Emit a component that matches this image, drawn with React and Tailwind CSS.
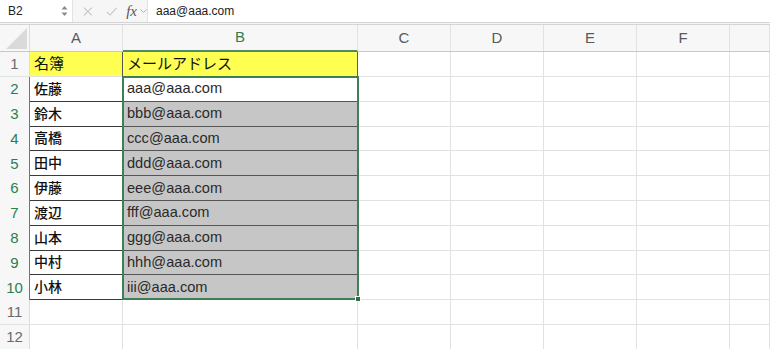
import React from "react";

const cols = [
  { key: "A", w: "w-[93px]" },
  { key: "B", w: "w-[235px]" },
  { key: "C", w: "w-[93px]" },
  { key: "D", w: "w-[93px]" },
  { key: "E", w: "w-[93px]" },
  { key: "F", w: "w-[93px]" },
  { key: "G", w: "flex-1" },
];

const rows = [
  ["佐藤", "aaa@aaa.com"],
  ["鈴木", "bbb@aaa.com"],
  ["高橋", "ccc@aaa.com"],
  ["田中", "ddd@aaa.com"],
  ["伊藤", "eee@aaa.com"],
  ["渡辺", "fff@aaa.com"],
  ["山本", "ggg@aaa.com"],
  ["中村", "hhh@aaa.com"],
  ["小林", "iii@aaa.com"],
];

const jp = "font-['Liberation_Sans','Noto_Sans_CJK_JP',sans-serif]";

const FormulaBar = () => (
  <div className="h-[25px] flex items-stretch bg-[#f6f6f6] border-b-[3px] border-double border-[#d4d4d4]">
    <div className="w-[73px] flex items-center bg-white pl-[8px] pr-[4px] border-r border-[#e2e2e2]">
      <span className="flex-1 text-[12px] text-[#222]">B2</span>
      <svg width="7" height="12" viewBox="0 0 7 12">
        <path d="M3.5 1 L6.5 4.5 L0.5 4.5 Z" fill="#8a8a8a" />
        <path d="M3.5 11 L6.5 7.5 L0.5 7.5 Z" fill="#8a8a8a" />
      </svg>
    </div>
    <div className="w-[74px] flex items-center gap-[13px] pl-[10px]">
      <svg width="11" height="11" viewBox="0 0 11 11">
        <path d="M1 1 L10 10 M10 1 L1 10" stroke="#c4c4c4" strokeWidth="1.2" />
      </svg>
      <svg width="13" height="11" viewBox="0 0 13 11">
        <path d="M1 6 L4.5 9.5 L12 1.5" stroke="#c4c4c4" strokeWidth="1.2" fill="none" />
      </svg>
      <div className="flex items-center gap-[3px] -ml-[4px]">
        <span className="font-['Liberation_Serif',serif] italic text-[15px] text-[#555] leading-none">fx</span>
        <svg width="7" height="5" viewBox="0 0 7 5">
          <path d="M0.5 0.5 L3.5 3.5 L6.5 0.5" stroke="#b0b0b0" strokeWidth="1" fill="none" />
        </svg>
      </div>
    </div>
    <div className="flex-1 flex items-center bg-white border-l border-[#e2e2e2] pl-[8px] text-[12px] text-[#222]">
      aaa@aaa.com
    </div>
  </div>
);

const HeaderRow = () => (
  <div className="h-[27px] flex bg-[#f7f7f7] border-b border-[#c8c8c8]">
    <div className="w-[30px] relative border-r border-[#dcdcdc]">
      <svg className="absolute right-[2px] bottom-[2px]" width="21" height="21" viewBox="0 0 21 21">
        <path d="M21 0 L21 21 L0 21 Z" fill="#dadada" />
      </svg>
    </div>
    {cols.map((c) => (
      <div
        key={c.key}
        className={`${c.w} flex items-center justify-center text-[15px] border-r border-[#e2e2e2] ${
          c.key === "B" ? "text-[#2e7d4f] border-b-2 border-b-[#4e8a62] -mb-px" : "text-[#5a5a5a]"
        }`}
      >
        {c.key === "G" ? "" : c.key}
      </div>
    ))}
  </div>
);

const RowHead = ({ n, active }) => (
  <div
    className={`w-[30px] flex items-center justify-center text-[15px] bg-[#f7f7f7] border-r ${
      active ? "text-[#2e7d4f] border-[#4e8a62]" : "text-[#6a6a6a] border-[#dcdcdc]"
    }`}
  >
    {n}
  </div>
);

const EmptyCells = () =>
  cols.slice(2).map((c) => <div key={c.key} className={`${c.w} border-r border-[#e2e2e2]`} />);

const App = () => {
  return (
    <div className={`w-[770px] h-[349px] overflow-hidden bg-white relative ${jp}`}>
      <FormulaBar />
      <HeaderRow />

      <div className="h-[25px] flex border-b border-[#e2e2e2]">
        <RowHead n={1} />
        <div className="w-[93px] bg-[#ffff52] flex items-center pl-[4px] text-[15px] text-[#111] border-r border-[#555]">
          名簿
        </div>
        <div className="w-[235px] bg-[#ffff52] flex items-center pl-[4px] text-[15px] text-[#111] border-r border-[#4a6a52]">
          メールアドレス
        </div>
        <EmptyCells />
      </div>

      {rows.map(([name, mail], i) => (
        <div key={name} className="h-[24.8px] flex">
          <RowHead n={i + 2} active />
          <div className="w-[93px] flex items-center pl-[4px] pt-px text-[14px] font-medium text-[#111] border-r border-b border-[#3a3a3a] bg-white">
            {name}
          </div>
          <div
            className={`w-[235px] flex items-center pl-[4px] pt-px text-[14.6px] text-[#2a2a2a] border-r border-b border-[#555] ${
              i === 0 ? "bg-white" : "bg-[#c6c6c6]"
            }`}
          >
            {mail}
          </div>
          {cols.slice(2).map((c) => (
            <div key={c.key} className={`${c.w} border-r border-b border-[#e2e2e2]`} />
          ))}
        </div>
      ))}

      {[11, 12].map((n) => (
        <div key={n} className="h-[25px] flex border-b border-[#e2e2e2]">
          <RowHead n={n} />
          <div className="w-[93px] border-r border-[#e2e2e2]" />
          <div className="w-[235px] border-r border-[#e2e2e2]" />
          <EmptyCells />
        </div>
      ))}

      {/* selection B2:B10 */}
      <div className="absolute left-[122px] top-[76px] w-[237px] h-[224px] border-2 border-[#3f7f55] pointer-events-none" />
      <div className="absolute left-[355px] top-[296px] w-[6px] h-[6px] bg-[#2f6e45] border border-white" />
    </div>
  );
};

export default App;
